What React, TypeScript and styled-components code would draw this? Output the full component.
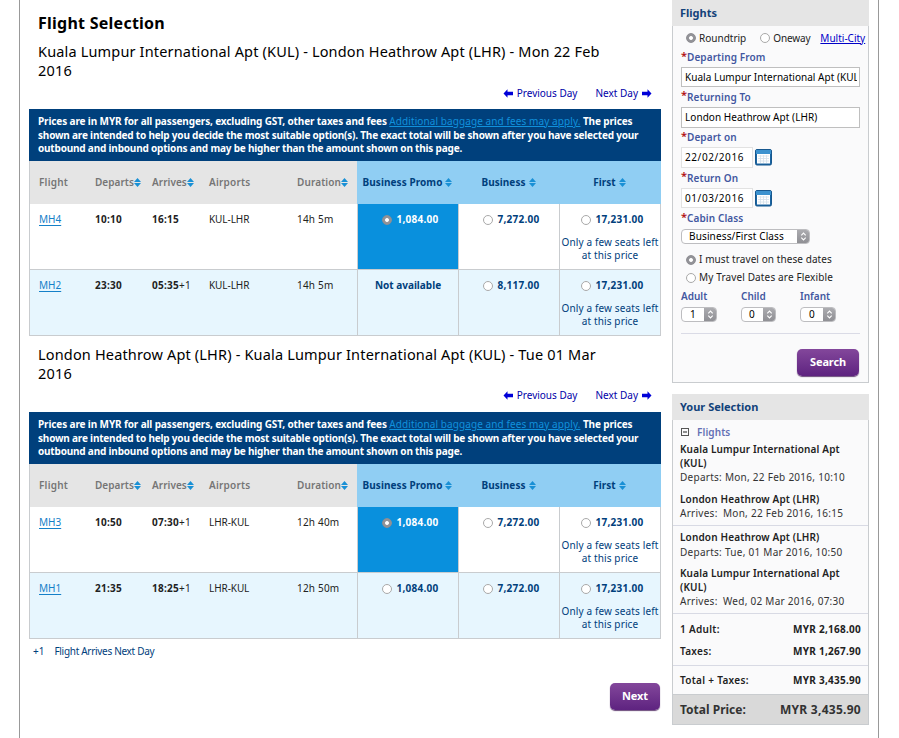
import React from "react";
import styled, { createGlobalStyle, css } from "styled-components";

const navy = "#00407c";
const line = "#c9cccf";

const GlobalStyle = createGlobalStyle`
  * { box-sizing: border-box; }
  body {
    margin: 0;
    background: #fff;
    font-family: "Noto Sans", "Open Sans", sans-serif;
    font-size: 10px;
    line-height: 13px;
    color: #222;
  }
  h1, h2, h3, p { margin: 0; }
`;

const Page = styled.div`
  width: 860px;
  height: 738px;
  margin-left: 19px;
  padding-left: 9px;
  border: solid #999;
  border-width: 0 1px;
  display: flex;
  align-items: flex-start;
  gap: 11px;
  overflow: hidden;
  white-space: nowrap;
`;

const Text = styled.span<{ $ls?: number }>`
  letter-spacing: ${(p) => p.$ls ?? 0}px;
`;

/* ---------- main column ---------- */

const Main = styled.main`
  width: 632px;
  flex: none;
`;

const Title = styled.h1`
  padding: 12px 0 0 9px;
  font-size: 16px;
  line-height: 22px;
  font-weight: 700;
  letter-spacing: 0.25px;
  color: #000;
`;

const RouteTitle = styled.h2<{ $first?: boolean }>`
  padding: ${(p) => (p.$first ? 8 : 9)}px 0 0 9px;
  font-size: 14.5px;
  line-height: 19px;
  font-weight: 400;
  letter-spacing: 0.165px;
  color: #000;
`;

const DayNav = styled.nav<{ $pb: number }>`
  display: flex;
  justify-content: flex-end;
  align-items: center;
  height: 29px;
  padding: 0 9px ${(p) => p.$pb}px 0;
  gap: 18px;
`;

const DayLink = styled.a`
  display: flex;
  align-items: center;
  gap: 4px;
  color: #0000a8;
  svg { display: block; }
`;

const Banner = styled.p`
  height: 52px;
  padding: 6px 9px 0;
  background: ${navy};
  color: #fff;
  font-weight: 700;
  line-height: 13.5px;
`;

const BannerLine = styled.span<{ $ls: number }>`
  display: block;
  letter-spacing: ${(p) => p.$ls}px;
`;

const FeesLink = styled.a`
  color: #1191dc;
  font-weight: 400;
  letter-spacing: 0.09px;
  text-decoration: underline;
`;

const row = css`
  display: grid;
  grid-template-columns: 65px 57px 57px 88px 60px repeat(3, 101px);
`;

const HeadRow = styled.div`
  ${row}
  height: 43px;
  line-height: 43px;
  border-left: 1px solid ${line};
  background: linear-gradient(to right, #e5e5e5 327px, #90cef3 327px);
  color: #757575;
  font-weight: 600;
`;

const HeadCell = styled.div<{ $first?: boolean }>`
  padding-left: ${(p) => (p.$first ? 9 : 0)}px;
  display: flex;
  align-items: center;
`;

const HeadFare = styled.div`
  display: flex;
  align-items: center;
  justify-content: center;
  gap: 3px;
  color: ${navy};
  font-weight: 700;
`;

const FlightRow = styled.div<{ $alt?: boolean }>`
  ${row}
  height: 66px;
  border: solid ${line};
  border-width: 0 1px 1px;
  background: ${(p) => (p.$alt ? "#e7f6fe" : "#fff")};
`;

const Cell = styled.div<{ $bold?: boolean; $first?: boolean }>`
  padding: 9px 0 0 ${(p) => (p.$first ? 9 : 0)}px;
  font-weight: ${(p) => (p.$bold ? 700 : 400)};
`;

const PlusOne = styled.span`
  font-weight: 400;
`;

const FlightLink = styled.a`
  color: #1580c8;
  text-decoration: underline;
  text-underline-offset: 2px;
`;

const FareCell = styled.div<{ $selected?: boolean }>`
  display: flex;
  flex-direction: column;
  align-items: center;
  gap: 10px;
  padding-top: 9px;
  border-left: 1px solid ${line};
  background: ${(p) => (p.$selected ? "#0990dd" : "transparent")};
  color: ${(p) => (p.$selected ? "#fff" : navy)};
`;

const Fare = styled.div`
  display: flex;
  align-items: center;
  gap: 4px;
  font-weight: 700;
`;

const PriceFare = styled(Fare)`
  padding-left: 5px;
`;

const Note = styled.div`
  line-height: 13.4px;
  text-align: center;
  letter-spacing: 0.14px;
`;

const Dot = styled.span<{ $on?: boolean }>`
  flex: none;
  display: block;
  width: 10px;
  height: 10px;
  border-radius: 50%;
  border: 1px solid ${(p) => (p.$on ? "#8e8e93" : "#a9a9a9")};
  background: ${(p) => (p.$on ? "radial-gradient(circle, #fff 1.5px, #939398 2.3px)" : "#fff")};
`;

const Footnote = styled.p`
  display: flex;
  gap: 10px;
  padding: 6px 0 0 4px;
  color: ${navy};
`;

const Button = styled.button<{ $w: number }>`
  display: block;
  width: ${(p) => p.$w}px;
  height: 27px;
  margin-left: auto;
  padding: 0 0 2px;
  border: 0;
  border-radius: 5px;
  background: linear-gradient(#83479b, #5e2380);
  box-shadow: 0 1px 1px #6b4a7a;
  color: #fff;
  font: 700 11px/20px "Noto Sans", sans-serif;
  letter-spacing: -0.15px;
`;

const NextBar = styled.div`
  padding: 25px 1px 0 0;
`;

/* ---------- sidebar ---------- */

const Sidebar = styled.aside`
  width: 197px;
  flex: none;
`;

const Panel = styled.section<{ $h: number; $mt?: number }>`
  height: ${(p) => p.$h}px;
  margin-top: ${(p) => p.$mt ?? 0}px;
  border: 1px solid ${line};
  border-top: 0;
  background: #fafafb;
`;

const PanelHead = styled.h3`
  height: 26px;
  margin: 0 -1px;
  padding-left: 8px;
  background: #e5e5e5;
  color: #12427a;
  font-size: 11px;
  line-height: 26px;
  font-weight: 700;
`;

const Line = styled.div<{ $h: number; $pl?: number; $gap?: number }>`
  display: flex;
  align-items: center;
  height: ${(p) => p.$h}px;
  padding-left: ${(p) => p.$pl ?? 8}px;
  gap: ${(p) => p.$gap ?? 0}px;
`;

const CityLink = styled.a`
  margin-left: 7px;
  color: #0000c8;
  text-decoration: underline;
`;

const Label = styled.div<{ $h: number; $pb?: number }>`
  display: flex;
  align-items: center;
  height: ${(p) => p.$h}px;
  padding: 0 0 ${(p) => p.$pb ?? 0}px 8px;
  color: #4257a0;
  font-weight: 600;
  letter-spacing: 0.1px;
  &::before {
    content: "*";
    width: 6px;
    margin-top: -5px;
    color: #b01010;
    font-size: 11px;
    letter-spacing: 0;
  }
`;

const Field = styled.div<{ $w: number; $h: number; $light?: boolean }>`
  width: ${(p) => p.$w}px;
  height: ${(p) => p.$h}px;
  padding: 0 2px 0 3px;
  border: 1px solid ${(p) => (p.$light ? "#e2e2e2" : "#bfbfbf")};
  background: #fff;
  color: #000;
  line-height: ${(p) => p.$h - 2}px;
`;

const Clip = styled.div`
  overflow: hidden;
`;

const Select = styled.div<{ $w: number; $pl: number }>`
  display: flex;
  width: ${(p) => p.$w}px;
  height: 15px;
  padding-left: ${(p) => p.$pl}px;
  border: 1px solid #bdbdc0;
  border-radius: 4px;
  overflow: hidden;
  background: #fff;
  color: #000;
  line-height: 13px;
`;

const Stepper = styled.span`
  display: flex;
  align-items: center;
  justify-content: center;
  width: 13px;
  height: 15px;
  margin: -1px -1px -1px auto;
  background: linear-gradient(#aeaeb2, #8d8d92);
`;

const Travellers = styled.div`
  display: grid;
  grid-template-columns: 60px 59px 50px;
  padding-left: 8px;
  line-height: 20px;
`;

const TravellerLabel = styled.div`
  height: 21px;
  color: #4257a0;
  font-weight: 600;
`;

const Divider = styled.div`
  height: 1px;
  margin: 11px 8px 15px;
  background: #dadbe6;
`;

const SearchBar = styled.div`
  padding-right: 9px;
`;

const Leg = styled.div<{ $h: number; $pt: number }>`
  height: ${(p) => p.$h}px;
  padding: ${(p) => p.$pt}px 0 0 7px;
  border-bottom: 1px solid #d8dae4;
`;

const CollapseRow = styled.div`
  display: flex;
  align-items: center;
  gap: 8px;
  height: 16px;
  padding-left: 1px;
  color: #6470b4;
  font-weight: 600;
`;

const Airport = styled.div<{ $pt?: number }>`
  padding-top: ${(p) => p.$pt ?? 0}px;
  font-weight: 600;
  line-height: 13.5px;
  letter-spacing: 0.15px;
`;

const When = styled.div`
  line-height: 15.6px;
  letter-spacing: 0.27px;
  color: #333;
`;

const ArriveLabel = styled.span`
  display: inline-block;
  width: 43px;
`;

const Sum = styled.div<{ $h: number; $pb?: number; $line?: boolean }>`
  display: flex;
  justify-content: space-between;
  align-items: center;
  height: ${(p) => p.$h}px;
  padding: 0 7px ${(p) => p.$pb ?? 0}px;
  border-bottom: ${(p) => (p.$line ? "1px solid #d8dae4" : "0")};
  font-weight: 600;
  letter-spacing: 0.3px;
`;

const Amount = styled.span`
  padding-top: 1px;
  font-weight: 700;
  letter-spacing: 0.26px;
`;

const Total = styled.div`
  display: flex;
  justify-content: space-between;
  align-items: center;
  height: 30px;
  padding: 0 7px;
  border-top: 1px solid ${line};
  background: #d9d9d9;
  color: #333;
  font-size: 12px;
  font-weight: 700;
`;

/* ---------- drawings ---------- */

const SortIcon = () => (
  <svg width="7" height="9" viewBox="0 0 7 9" fill="#1990d5">
    <path d="M0 4 3.5 0 7 4ZM0 5h7L3.5 9Z" />
  </svg>
);

const Arrow = ({ right }: { right?: boolean }) => (
  <svg width="10" height="9" viewBox="0 0 10 9" fill="#0000d8">
    <path d={right ? "M9.5 4.5 5.5.3v2.4H0v3.6h5.5v2.4Z" : "M.5 4.5 4.5.3v2.4H10v3.6H4.5v2.4Z"} />
  </svg>
);

const CalendarIcon = () => (
  <svg width="17" height="17" viewBox="0 0 17 17">
    <rect x=".5" y=".5" width="16" height="15.5" rx="1.5" fill="#1b65a2" stroke="#17588f" />
    <rect x="1" y="1" width="15" height="4" fill="#3c92cf" />
    <rect x="2" y="5" width="13" height="9.5" fill="#fff" />
    <path d="M3 7h11M3 9.5h11M3 12h11M5.5 6v8M8.5 6v8M11.5 6v8" stroke="#d3e0ea" strokeWidth=".8" />
  </svg>
);

const Chevrons = () => (
  <svg width="7" height="9" viewBox="0 0 7 9" fill="none" stroke="#fff" strokeWidth="1.1">
    <path d="M1.3 3.3 3.5 1.1l2.2 2.2M1.3 5.7l2.2 2.2 2.2-2.2" />
  </svg>
);

const CollapseIcon = () => (
  <svg width="8" height="8" viewBox="0 0 8 8" fill="none" stroke="#555">
    <rect x=".5" y=".5" width="7" height="7" />
    <path d="M2 4h4" stroke="#222" />
  </svg>
);

/* ---------- data ---------- */

type Flight = {
  no: string; dep: string; arr: string; next?: boolean;
  route: string; dur: string; promo?: string; selected?: boolean; business: string;
};

const outbound: Flight[] = [
  { no: "MH4", dep: "10:10", arr: "16:15", route: "KUL-LHR", dur: "14h 5m", promo: "1,084.00", selected: true, business: "7,272.00" },
  { no: "MH2", dep: "23:30", arr: "05:35", next: true, route: "KUL-LHR", dur: "14h 5m", business: "8,117.00" },
];
const inbound: Flight[] = [
  { no: "MH3", dep: "10:50", arr: "07:30", next: true, route: "LHR-KUL", dur: "12h 40m", promo: "1,084.00", selected: true, business: "7,272.00" },
  { no: "MH1", dep: "21:35", arr: "18:25", next: true, route: "LHR-KUL", dur: "12h 50m", promo: "1,084.00", business: "7,272.00" },
];

const Price = ({ value, on }: { value: string; on?: boolean }) => (
  <PriceFare>
    <Dot $on={on} />
    <Text $ls={0.28}>{value}</Text>
  </PriceFare>
);

const FlightTable = ({ flights }: { flights: Flight[] }) => (
  <>
    <Banner>
      <BannerLine $ls={-0.125}>
        Prices are in MYR for all passengers, excluding GST, other taxes and fees{" "}
        <FeesLink>Additional baggage and fees may apply.</FeesLink> The prices
      </BannerLine>
      <BannerLine $ls={-0.197}>
        shown are intended to help you decide the most suitable option(s). The exact total will be shown after you have selected your
      </BannerLine>
      <BannerLine $ls={-0.19}>
        outbound and inbound options and may be higher than the amount shown on this page.
      </BannerLine>
    </Banner>
    <HeadRow>
      <HeadCell $first><Text $ls={0.22}>Flight</Text></HeadCell>
      <HeadCell><Text $ls={0.05}>Departs</Text><SortIcon /></HeadCell>
      <HeadCell><Text $ls={0.05}>Arrives</Text><SortIcon /></HeadCell>
      <HeadCell><Text $ls={0.22}>Airports</Text></HeadCell>
      <HeadCell><Text $ls={0.12}>Duration</Text><SortIcon /></HeadCell>
      <HeadFare><Text $ls={0.07}>Business Promo</Text><SortIcon /></HeadFare>
      <HeadFare><Text $ls={0.05}>Business</Text><SortIcon /></HeadFare>
      <HeadFare><Text>First</Text><SortIcon /></HeadFare>
    </HeadRow>
    {flights.map((f, i) => (
      <FlightRow key={f.no} $alt={i % 2 === 1}>
        <Cell $first><FlightLink>{f.no}</FlightLink></Cell>
        <Cell $bold><Text $ls={0.26}>{f.dep}</Text></Cell>
        <Cell $bold><Text $ls={0.26}>{f.arr}{f.next && <PlusOne>+1</PlusOne>}</Text></Cell>
        <Cell><Text $ls={-0.08}>{f.route}</Text></Cell>
        <Cell><Text $ls={0.2}>{f.dur}</Text></Cell>
        <FareCell $selected={f.selected}>
          {f.promo ? <Price value={f.promo} on={f.selected} /> : <Fare>Not available</Fare>}
        </FareCell>
        <FareCell><Price value={f.business} /></FareCell>
        <FareCell>
          <Price value="17,231.00" />
          <Note>Only a few seats left<br />at this price</Note>
        </FareCell>
      </FlightRow>
    ))}
  </>
);

const Days = ({ pb }: { pb: number }) => (
  <DayNav $pb={pb}>
    <DayLink><Arrow />Previous Day</DayLink>
    <DayLink>Next Day<Arrow right /></DayLink>
  </DayNav>
);

const Picker = ({ value, w, pl }: { value: string; w: number; pl: number }) => (
  <Select $w={w} $pl={pl}>
    <Text $ls={0.14}>{value}</Text>
    <Stepper><Chevrons /></Stepper>
  </Select>
);

export default function App() {
  return (
    <>
      <GlobalStyle />
      <Page>
        <Main>
          <Title>Flight Selection</Title>
          <RouteTitle $first>
            Kuala Lumpur International Apt (KUL) - London Heathrow Apt (LHR) - Mon 22 Feb<br />2016
          </RouteTitle>
          <Days pb={2} />
          <FlightTable flights={outbound} />
          <RouteTitle>
            London Heathrow Apt (LHR) - Kuala Lumpur International Apt (KUL) - Tue 01 Mar<br />2016
          </RouteTitle>
          <Days pb={4} />
          <FlightTable flights={inbound} />
          <Footnote><span>+1</span><Text $ls={-0.3}>Flight Arrives Next Day</Text></Footnote>
          <NextBar><Button $w={50}>Next</Button></NextBar>
        </Main>

        <Sidebar>
          <Panel $h={383}>
            <PanelHead>Flights</PanelHead>
            <Line $h={24} $pl={13} $gap={3}>
              <Dot $on /><Text>Roundtrip</Text>
              <Line $h={24} $pl={11} $gap={3}><Dot /><Text $ls={-0.15}>Oneway</Text></Line>
              <CityLink>Multi-City</CityLink>
            </Line>
            <Label $h={17} $pb={2}>Departing From</Label>
            <Line $h={20}><Field $w={179} $h={20}><Clip><Text $ls={0.02}>Kuala Lumpur International Apt (KUL)</Text></Clip></Field></Line>
            <Label $h={20}>Returning To</Label>
            <Line $h={21}><Field $w={179} $h={21}><Text $ls={0.06}>London Heathrow Apt (LHR)</Text></Field></Line>
            <Label $h={19}>Depart on</Label>
            <Line $h={21} $gap={2}><Field $w={72} $h={21} $light><Text $ls={0.58}>22/02/2016</Text></Field><CalendarIcon /></Line>
            <Label $h={20}>Return On</Label>
            <Line $h={20} $gap={2}><Field $w={72} $h={20} $light><Text $ls={0.58}>01/03/2016</Text></Field><CalendarIcon /></Line>
            <Label $h={21}>Cabin Class</Label>
            <Line $h={15}><Picker value="Business/First Class" w={129} pl={7} /></Line>
            <Line $h={31} $pl={13} $gap={3}><Dot $on /><Text $ls={0.08}>I must travel on these dates</Text></Line>
            <Line $h={5} $pl={13} $gap={3}><Dot /><Text $ls={0.14}>My Travel Dates are Flexible</Text></Line>
            <Line $h={6} />
            <Travellers>
              <TravellerLabel>Adult</TravellerLabel>
              <TravellerLabel>Child</TravellerLabel>
              <TravellerLabel>Infant</TravellerLabel>
              <Picker value="1" w={36} pl={8} />
              <Picker value="0" w={35} pl={7} />
              <Picker value="0" w={36} pl={8} />
            </Travellers>
            <Divider />
            <SearchBar><Button $w={62}>Search</Button></SearchBar>
          </Panel>

          <Panel $h={331} $mt={11}>
            <PanelHead>Your Selection</PanelHead>
            <Leg $h={106} $pt={4}>
              <CollapseRow>
                <CollapseIcon />
                <Text $ls={0.1}>Flights</Text>
              </CollapseRow>
              <Airport $pt={3}>Kuala Lumpur International Apt<br />(KUL)</Airport>
              <When>Departs: Mon, 22 Feb 2016, 10:10</When>
              <Airport $pt={7}>London Heathrow Apt (LHR)</Airport>
              <When><ArriveLabel>Arrives:</ArriveLabel>Mon, 22 Feb 2016, 16:15</When>
            </Leg>
            <Leg $h={88} $pt={5}>
              <Airport>London Heathrow Apt (LHR)</Airport>
              <When>Departs: Tue, 01 Mar 2016, 10:50</When>
              <Airport $pt={7}>Kuala Lumpur International Apt<br />(KUL)</Airport>
              <When><ArriveLabel>Arrives:</ArriveLabel>Wed, 02 Mar 2016, 07:30</When>
            </Leg>
            <Sum $h={30}>1 Adult:<Amount>MYR 2,168.00</Amount></Sum>
            <Sum $h={22} $pb={7} $line>Taxes:<Amount>MYR 1,267.90</Amount></Sum>
            <Sum $h={28}>Total + Taxes:<Amount>MYR 3,435.90</Amount></Sum>
            <Total>Total Price:<Text $ls={0.27}>MYR 3,435.90</Text></Total>
          </Panel>
        </Sidebar>
      </Page>
    </>
  );
}
